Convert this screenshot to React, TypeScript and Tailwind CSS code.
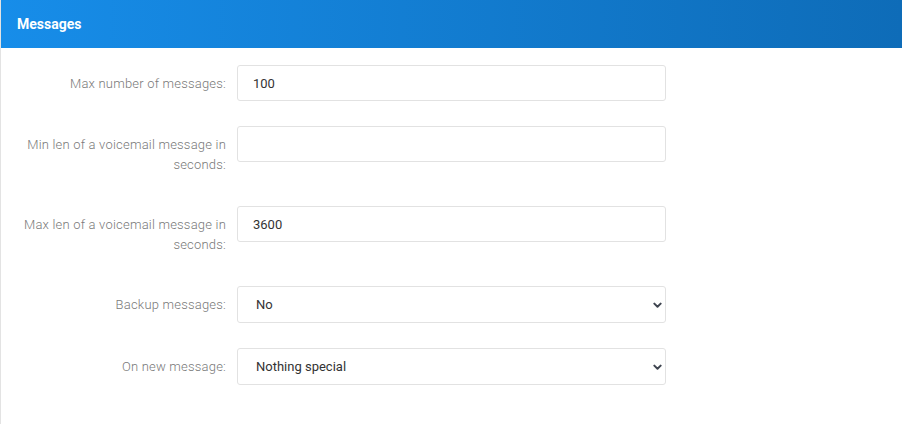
import React from 'react';

type Field =
    | { kind: 'input'; label: string; value: string }
    | { kind: 'select'; label: string; value: string; options: string[] };

const fields: Field[] = [
    { kind: 'input', label: 'Max number of messages:', value: '100' },
    { kind: 'input', label: 'Min len of a voicemail message in seconds:', value: '' },
    { kind: 'input', label: 'Max len of a voicemail message in seconds:', value: '3600' },
    { kind: 'select', label: 'Backup messages:', value: 'No', options: ['No', 'Yes'] },
    {
        kind: 'select',
        label: 'On new message:',
        value: 'Nothing special',
        options: ['Nothing special', 'Attach', 'Delete'],
    },
];

function Chevron() {
    return (
        <svg
            className="pointer-events-none absolute right-[4px] top-1/2 h-[9px] w-[9px] -translate-y-1/2 text-[#3f4550]"
            viewBox="0 0 10 10"
            fill="none"
            stroke="currentColor"
            strokeWidth={2.2}
            strokeLinecap="round"
            strokeLinejoin="round"
        >
            <path d="M1.5 3.5L5 7l3.5-3.5" />
        </svg>
    );
}

export default function App() {
    return (
        <div className="h-[424px] w-[902px] overflow-hidden bg-white font-['Roboto',sans-serif]">
            <div className="h-full border-l border-[#e3e3e3]">
                <div className="flex h-12 items-center bg-gradient-to-r from-[#178de9] to-[#0e6cb8] pl-4 pt-px text-[14px] font-bold text-white">
                    Messages
                </div>

                <form className="flex flex-col gap-[25px] pt-[17px]">
                    {fields.map((f) => (
                        <div key={f.label} className="flex items-start">
                            <label className="w-[236px] shrink-0 pb-[6px] pl-[18px] pr-[11px] pt-[9px] text-right font-['Roboto_Light','Roboto',sans-serif] text-[13px] font-light leading-[20px] tracking-[0.2px] text-[#7a7a7a]">
                                {f.label}
                            </label>
                            {f.kind === 'input' ? (
                                <input
                                    type="text"
                                    defaultValue={f.value}
                                    className="h-9 w-[429px] rounded-[3px] border border-[#e2e2e2] bg-white px-[15px] text-[13px] text-[#333] outline-none"
                                />
                            ) : (
                                <div className="relative w-[429px]">
                                    <select
                                        defaultValue={f.value}
                                        className="h-[37px] w-full appearance-none rounded-[3px] border border-[#e2e2e2] bg-white pl-[18px] text-[13px] text-[#333] outline-none"
                                    >
                                        {f.options.map((o) => (
                                            <option key={o}>{o}</option>
                                        ))}
                                    </select>
                                    <Chevron />
                                </div>
                            )}
                        </div>
                    ))}
                </form>
            </div>
        </div>
    );
}
